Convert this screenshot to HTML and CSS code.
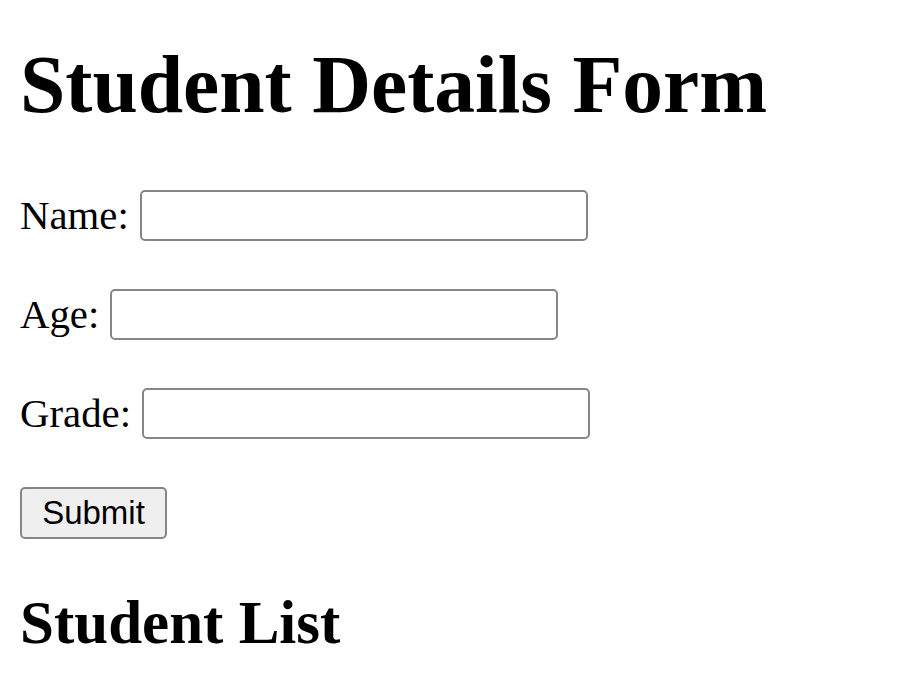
FILE: index.html
```html
<!DOCTYPE html>
<html>
<head>
<meta charset="utf-8">
<title>Student Details Form</title>
<link rel="stylesheet" href="styles.css">
</head>
<body>
<h1 class="title">Student Details Form</h1>
<form class="form">
  <div class="row"><label class="label" for="name">Name:</label><input class="field" id="name" type="text"></div>
  <div class="row"><label class="label" for="age">Age:</label><input class="field" id="age" type="text"></div>
  <div class="row"><label class="label" for="grade">Grade:</label><input class="field" id="grade" type="text"></div>
  <div class="actions"><button class="submit" type="button">Submit</button></div>
</form>
<h2 class="subtitle">Student List</h2>
</body>
</html>
```
FILE: styles.css
```css
html, body {
  background: #ffffff;
}
body {
  margin: 0;
  padding: 39px 20px 0 20px;
  font-family: "Liberation Serif", "Times New Roman", serif;
  color: #000000;
}
.title {
  margin: 0;
  font-size: 81.5px;
  line-height: 92px;
  font-weight: bold;
}
.form {
  margin: 59px 0 0 0;
  display: flex;
  flex-direction: column;
  gap: 48px;
}
.row {
  display: flex;
  align-items: center;
  gap: 11px;
  height: 51px;
}
.label {
  font-size: 40.8px;
  line-height: 46px;
}
.field {
  box-sizing: border-box;
  width: 448px;
  height: 51px;
  margin: 0;
  border: 2px solid #868686;
  border-radius: 5px;
  background: #ffffff;
  padding: 0 5px;
  font-size: 33px;
}
.actions {
  display: flex;
}
.submit {
  box-sizing: border-box;
  width: 147px;
  height: 52px;
  margin: 0;
  padding: 0;
  border: 2px solid #868686;
  border-radius: 5px;
  background: #efefef;
  color: #000000;
  font-family: "Liberation Sans", Arial, sans-serif;
  font-size: 33px;
}
.subtitle {
  margin: 49px 0 0 0;
  font-size: 61px;
  line-height: 69px;
  font-weight: bold;
}
```
